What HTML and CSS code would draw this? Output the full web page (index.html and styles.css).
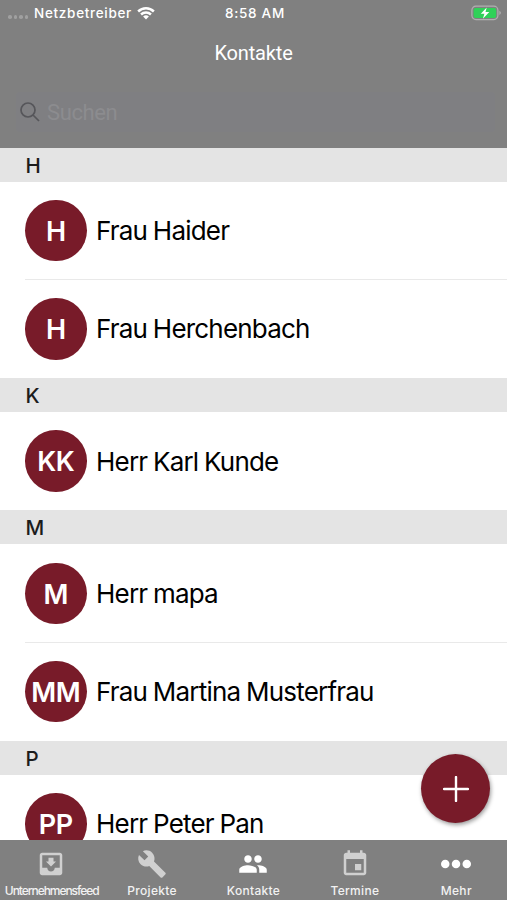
FILE: index.html
```
<!DOCTYPE html>
<html lang="de">
  <head>
    <meta charset="UTF-8" />
    <title>Kontakte</title>
    <link rel="stylesheet" href="styles.css">
  </head>
  <body>
    <div class="app">
      <header class="header">
        <div class="status-bar">
          <div class="carrier">
            <span class="signal"><i></i><i></i><i></i><i></i></span>
            <span class="carrier-name">Netzbetreiber</span>
            <svg class="wifi" viewBox="0 0 18 14">
              <path d="M0.3 4.6a12.4 12.4 0 0 1 17.4 0l-1.7 1.8a10 10 0 0 0-14 0z" />
              <path d="M3.2 7.6a8.3 8.3 0 0 1 11.6 0l-1.7 1.8a5.9 5.9 0 0 0-8.2 0z" />
              <path d="M6.1 10.6a4.2 4.2 0 0 1 5.8 0L9 13.6z" />
            </svg>
          </div>
          <div class="clock">8:58 AM</div>
          <svg class="battery" viewBox="0 0 31 16">
            <rect class="battery-frame" x="0.9" y="1.2" width="26" height="13.4" rx="4" />
            <rect class="battery-level" x="2.6" y="2.9" width="22.6" height="10" rx="2" />
            <path class="battery-cap" d="M28.4 5.8c2 .8 2 3.4 0 4.2z" />
            <path class="battery-bolt" d="M15.7 2.4 9.8 8.8h3.6l-1.5 4.9 6.4-6.6h-3.8z" />
          </svg>
        </div>
        <h1 class="title">Kontakte</h1>
        <div class="search">
          <svg class="search-icon" viewBox="0 0 20 20">
            <circle cx="8" cy="8" r="7" />
            <path d="M13 13l6 6" />
          </svg>
          <span>Suchen</span>
        </div>
      </header>

      <main class="contacts">
        <h2 class="letter">H</h2>
        <div class="contact">
          <div class="avatar">H</div>
          <div class="name">Frau Haider</div>
        </div>
        <div class="contact">
          <div class="avatar">H</div>
          <div class="name">Frau Herchenbach</div>
        </div>

        <h2 class="letter">K</h2>
        <div class="contact">
          <div class="avatar">KK</div>
          <div class="name">Herr Karl Kunde</div>
        </div>

        <h2 class="letter">M</h2>
        <div class="contact">
          <div class="avatar">M</div>
          <div class="name">Herr mapa</div>
        </div>
        <div class="contact">
          <div class="avatar">MM</div>
          <div class="name">Frau Martina Musterfrau</div>
        </div>

        <h2 class="letter">P</h2>
        <div class="contact">
          <div class="avatar">PP</div>
          <div class="name">Herr Peter Pan</div>
        </div>
      </main>

      <button class="add-button" aria-label="Kontakt hinzufügen">
        <svg viewBox="0 0 26 26"><path d="M13 1v24M1 13h24" /></svg>
      </button>

      <nav class="tabs">
        <div class="tab">
          <svg viewBox="0 0 24 24"><path d="M19 3H4.99c-1.11 0-1.98.9-1.98 2L3 19c0 1.1.88 2 1.99 2H19c1.1 0 2-.9 2-2V5c0-1.1-.9-2-2-2zm0 12h-4c0 1.66-1.35 3-3 3s-3-1.34-3-3H4.99V5H19v10zm-3-5h-2V7h-4v3H8l4 4 4-4z" /></svg>
          <span class="narrow">Unternehmensfeed</span>
        </div>
        <div class="tab">
          <svg viewBox="0 0 24 24"><path d="M22.7 19l-9.1-9.1c.9-2.3.4-5-1.5-6.9-2-2-5-2.4-7.4-1.3L9 6 6 9 1.6 4.7C.4 7.1.9 10.1 2.9 12.1c1.9 1.9 4.6 2.4 6.9 1.5l9.1 9.1c.4.4 1 .4 1.4 0l2.3-2.3c.5-.4.5-1.1.1-1.4z" /></svg>
          <span>Projekte</span>
        </div>
        <div class="tab active">
          <svg viewBox="0 0 24 24"><path d="M16 11c1.66 0 2.99-1.34 2.99-3S17.66 5 16 5c-1.66 0-3 1.34-3 3s1.34 3 3 3zm-8 0c1.66 0 2.99-1.34 2.99-3S9.66 5 8 5C6.34 5 5 6.34 5 8s1.34 3 3 3zm0 2c-2.33 0-7 1.17-7 3.5V19h14v-2.5c0-2.33-4.67-3.5-7-3.5zm8 0c-.29 0-.62.02-.97.05 1.16.84 1.97 1.97 1.97 3.45V19h6v-2.5c0-2.33-4.67-3.5-7-3.5z" /></svg>
          <span>Kontakte</span>
        </div>
        <div class="tab">
          <svg viewBox="0 0 24 24"><path d="M17 12h-5v5h5v-5zM16 1v2H8V1H6v2H5c-1.11 0-1.99.9-1.99 2L3 19c0 1.1.89 2 2 2h14c1.1 0 2-.9 2-2V5c0-1.1-.9-2-2-2h-1V1h-2zm3 18H5V8h14v11z" /></svg>
          <span>Termine</span>
        </div>
        <div class="tab active">
          <svg viewBox="0 0 24 24"><circle cx="3.4" cy="12" r="3.4" /><circle cx="12" cy="12" r="3.4" /><circle cx="20.6" cy="12" r="3.4" /></svg>
          <span>Mehr</span>
        </div>
      </nav>
    </div>
  </body>
</html>
```
FILE: styles.css
```
* {
  box-sizing: border-box;
}

body {
  margin: 0;
  font-family: Inter, "Liberation Sans", sans-serif;
  background: #fff;
}

.app {
  position: relative;
  display: flex;
  flex-direction: column;
  height: 900px;
  overflow: hidden;
}

/* Kopfbereich */
.header {
  flex: none;
  height: 147.5px;
  background: #808080;
  color: #fff;
}

.status-bar {
  display: grid;
  grid-template-columns: 1fr auto 1fr;
  align-items: center;
  height: 26px;
  padding: 0 5px 0 8px;
  font-size: 13.5px;
  font-weight: 500;
}

.carrier {
  display: flex;
  align-items: center;
}

.signal {
  display: flex;
  gap: 2px;
  width: 26px;
  padding-top: 8px;
}

.signal i {
  width: 3.5px;
  height: 3.5px;
  border-radius: 50%;
  background: #a0a0a0;
}

.carrier-name {
  letter-spacing: 0.7px;
}

.wifi {
  width: 18px;
  height: 14px;
  margin-left: 5px;
  fill: #fff;
}

.clock {
  letter-spacing: 0.7px;
}

.battery {
  justify-self: end;
  width: 31px;
  height: 16px;
}

.battery-frame {
  fill: none;
  stroke: #b0b0b0;
  stroke-width: 1.2;
}

.battery-level {
  fill: #30d158;
}

.battery-cap {
  fill: #b0b0b0;
}

.battery-bolt {
  fill: #fff;
}

.title {
  margin: 14px 0 0;
  font-family: Roboto, sans-serif;
  font-size: 20px;
  font-weight: 400;
  line-height: 26px;
  letter-spacing: -0.15px;
  text-align: center;
}

.search {
  display: flex;
  align-items: center;
  height: 40px;
  margin: 26px 12px 0 16px;
  padding-left: 4px;
  border-radius: 4px;
  background: #7f7f82;
  color: #8c8c8f;
  font-family: Roboto, sans-serif;
  font-size: 22px;
  letter-spacing: -0.4px;
}

.search-icon {
  width: 20px;
  height: 20px;
  margin-right: 7px;
  fill: none;
  stroke: #56565a;
  stroke-width: 1.7;
}

/* Kontaktliste */
.contacts {
  flex: 1;
  min-height: 0;
  overflow: hidden;
}

.letter {
  height: 34px;
  margin: 0;
  padding-left: 25.5px;
  background: #e4e4e4;
  color: #1c1c1c;
  font-size: 20.5px;
  font-weight: 500;
  line-height: 36px;
}

.contact {
  display: flex;
  align-items: center;
  gap: 9.5px;
  height: 98.25px;
  margin-left: 25px;
}

.contact + .contact {
  box-shadow: 0 -1px 0 #e9e9e9;
}

.avatar {
  flex: none;
  width: 61.5px;
  height: 61.5px;
  border-radius: 50%;
  background: #781b29;
  color: #fff;
  font-size: 27px;
  font-weight: 600;
  line-height: 63.5px;
  letter-spacing: -0.5px;
  text-align: center;
}

.name {
  color: #000;
  font-size: 26px;
  letter-spacing: -0.8px;
  word-spacing: -0.8px;
  white-space: nowrap;
}

.add-button {
  position: absolute;
  right: 17px;
  bottom: 77px;
  display: grid;
  place-items: center;
  width: 69px;
  height: 69px;
  padding: 0;
  border: none;
  border-radius: 50%;
  background: #781b29;
  box-shadow: 1px 2px 4px rgba(0, 0, 0, 0.4);
}

.add-button svg {
  width: 26px;
  height: 26px;
  stroke: #fff;
  stroke-width: 2.4;
  stroke-linecap: round;
}

/* Tableiste */
.tabs {
  display: grid;
  grid-template-columns: repeat(5, 1fr);
  flex: none;
  height: 60px;
  background: #808080;
}

.tab {
  display: flex;
  flex-direction: column;
  align-items: center;
  padding-top: 8.5px;
  color: #d0d0d0;
}

.tab svg {
  width: 30px;
  height: 30px;
  fill: currentColor;
}

.tab.active {
  color: #fff;
}

.tab span {
  margin-top: 4.5px;
  color: #f2f2f2;
  font-size: 12px;
  font-weight: 500;
  line-height: 16px;
  letter-spacing: 0.3px;
}

.tab .narrow {
  padding-left: 2px;
  letter-spacing: -1.05px;
}
```
